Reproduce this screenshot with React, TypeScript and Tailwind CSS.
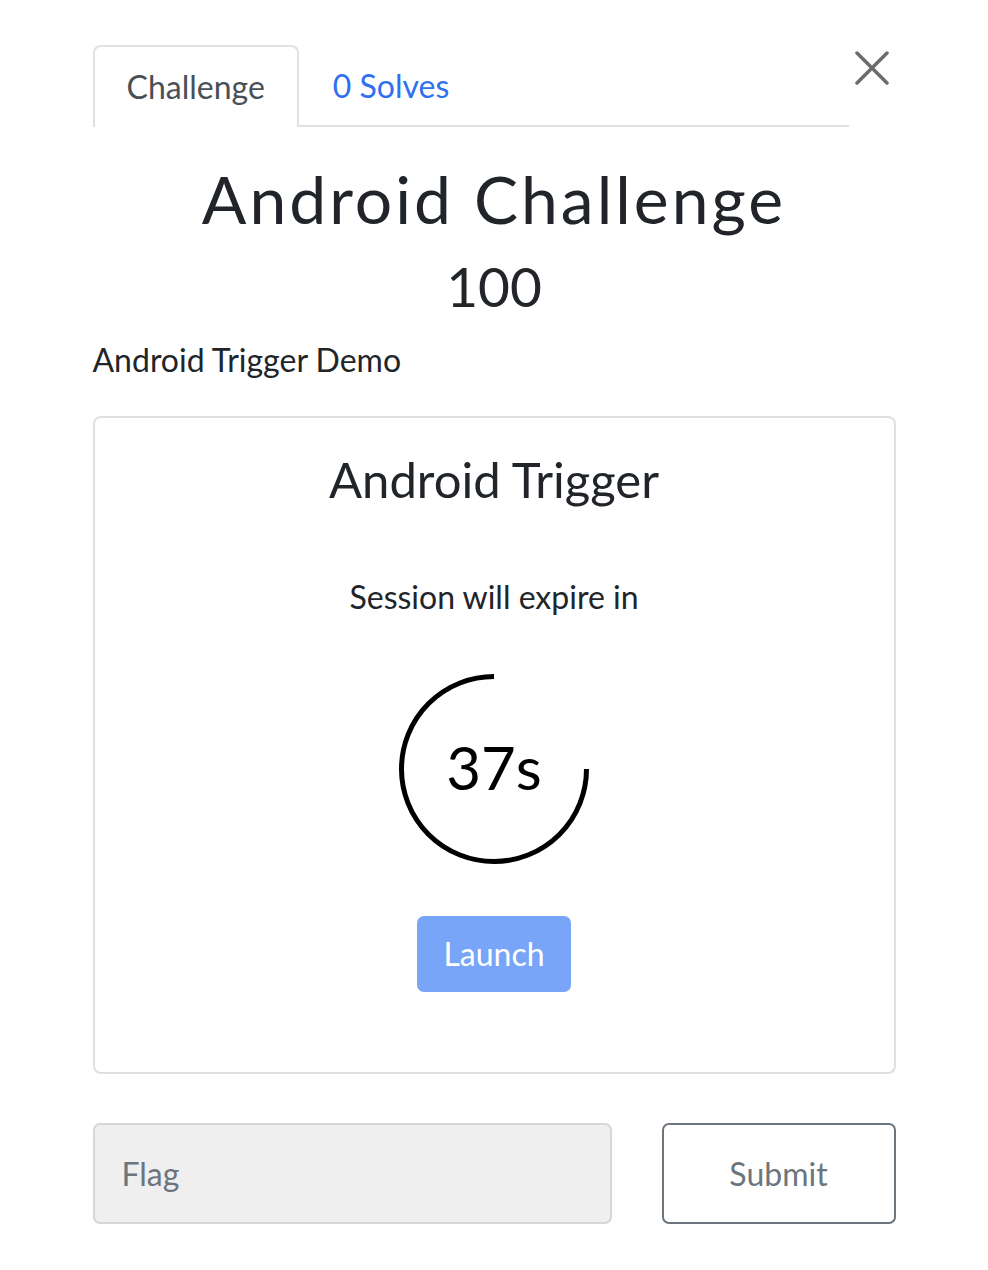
import React from "react";

export default function App() {
  return (
    <div
      className="min-h-[1270px] w-[988px] bg-white text-[#212529]"
      style={{ fontFamily: "Lato, 'Noto Sans', sans-serif" }}
    >
      <div className="mx-auto w-[803px] pt-[45px]">
        {/* Tabs header */}
        <div className="flex items-start">
          <div className="flex flex-1 border-b-2 border-[#dee2e6]">
            <div className="-mb-[2px] rounded-t-[8px] border-2 border-b-0 border-[#dee2e6] bg-white px-[32px] py-[16px] text-[32px] leading-[48px] text-[#495057]">
              Challenge
            </div>
            <div className="px-[34px] pt-[17px] pb-[15px] text-[32px] leading-[48px] text-[#2f6ff0]">
              0 Solves
            </div>
          </div>
          <button className="flex h-[48px] w-[47px] items-center justify-end">
            <svg width="34" height="34" viewBox="0 0 34 34" className="mt-[-2px] mr-[7px]">
              <path d="M2 2 L32 32 M32 2 L2 32" stroke="#6c6c6c" strokeWidth="3.5" strokeLinecap="round" />
            </svg>
          </button>
        </div>

        {/* Title */}
        <h2 className="mt-[32px] text-center text-[66px] leading-[80px] tracking-[3px]">
          Android Challenge
        </h2>
        <div className="mt-[14px] text-center text-[55px] leading-[66px]">100</div>
        <p className="mt-[17px] text-[32px] leading-[48px]">Android Trigger Demo</p>

        {/* Card */}
        <div className="mt-[32px] flex flex-col items-center rounded-[8px] border-2 border-[#e0e0e0] pt-[32px] pb-[80px]">
          <div className="text-[49px] leading-[59px]">Android Trigger</div>
          <div className="mt-[64px] text-[32px] leading-[48px]">Session will expire in</div>
          <div className="relative mt-[53px] h-[190px] w-[190px]">
            <svg width="190" height="190" viewBox="0 0 190 190" className="absolute inset-0">
              <path
                d="M 95 2.5 A 92.5 92.5 0 1 0 187.5 95"
                fill="none"
                stroke="#000"
                strokeWidth="5"
              />
            </svg>
            <div className="absolute inset-0 flex items-center justify-center pb-[4px] text-[60px] leading-none text-black">
              37s
            </div>
          </div>
          <button className="mt-[52px] h-[76px] rounded-[7px] bg-[#78a5f8] px-[26px] text-[32px] text-white">
            Launch
          </button>
        </div>

        {/* Flag row */}
        <div className="mt-[49px] flex gap-[50px]">
          <div className="flex h-[101px] flex-1 items-center rounded-[7px] border-2 border-[#d6d6d6] bg-[#efefef] px-[27px] text-[32px] text-[#6c757d]">
            Flag
          </div>
          <button className="h-[101px] w-[234px] rounded-[7px] border-2 border-[#6c757d] text-[32px] text-[#6c757d]">
            Submit
          </button>
        </div>
      </div>
    </div>
  );
}
